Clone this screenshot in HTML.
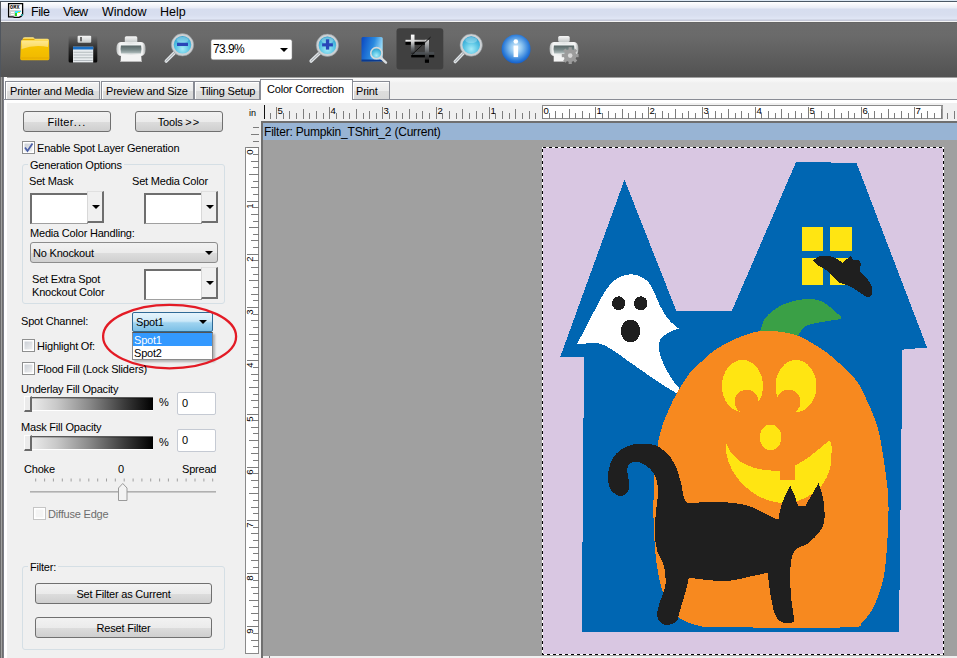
<!DOCTYPE html>
<html><head><meta charset="utf-8">
<style>
*,*:before,*:after{box-sizing:border-box;margin:0;padding:0}
html,body{width:957px;height:658px;overflow:hidden;background:#f0f0f0;font-family:"Liberation Sans",sans-serif;font-size:11px;letter-spacing:-0.2px;color:#000}
.a{position:absolute}
.t{position:absolute;white-space:nowrap;line-height:12px}
#frameL{left:0;top:77px;width:7px;height:581px;background:linear-gradient(90deg,#6a6a6a 0,#6a6a6a 1px,#a0a0a0 1px,#a0a0a0 2px,#6e6e6e 2px,#6e6e6e 3px,#7a7c86 3px,#7a7c86 4px,#fff 4px,#fff 7px)}
#frameT{left:0;top:1px;width:1px;height:76px;background:#50565e}
#menu{left:0;top:0;width:957px;height:22px;background:linear-gradient(180deg,#dae6f2 0,#dae6f2 1px,#4a5866 1px,#4a5866 2px,#fff 2px,#fcfcfe 3px,#e8ecf6 8px,#d6ddef 9px,#d8deef 15px,#e0e6f5 19px,#c4c8d8 20px,#c4c8d8 20.5px,#f4f4f4 21px,#f4f4f4 22px)}
#toolbar{left:1px;top:22px;width:956px;height:55px;background:linear-gradient(180deg,#5e5e5e 0,#6c6c6c 1px,#6a6a6a 25%,#5a5a5a 75%,#525252 100%)}
#below{left:3px;top:77px;width:954px;height:26px;background:linear-gradient(180deg,#a0a0a0 0,#a0a0a0 1px,#fafafa 1px,#f6f6f6 4px,#f0f0f0 6px,#f0f0f0 22px,#fff 22px)}
.tab{position:absolute;top:81px;height:19px;border:1px solid #898c95;border-bottom:none;box-shadow:inset 1px 1px 0 #fff;background:linear-gradient(180deg,#f3f3f3 0,#ebebeb 50%,#dcdcdc 51%,#d8d8d8 100%);white-space:nowrap;line-height:18px}
.btn{position:absolute;border:1px solid #707070;border-radius:3px;background:linear-gradient(180deg,#f2f2f2 0,#ebebeb 50%,#dddddd 51%,#cfcfcf 100%);text-align:center;line-height:20px}
.cb{position:absolute;width:13px;height:13px;border:1px solid #8e8f8f;background:linear-gradient(135deg,#c4c9d0,#f6f6f6);box-shadow:inset 0 0 0 1.5px #fff}
.grp{position:absolute;border:1px solid #d5dfe5;border-radius:3px}
.lbl{position:absolute;background:#f0f0f0;padding:0 2px;white-space:nowrap;line-height:12px}
.cp{width:74px;height:32px}
.cp:before{content:"";position:absolute;left:0;top:2px;width:58px;height:31px;background:#fff;border-top:2px solid #6e6e6e;border-left:2px solid #6e6e6e;border-bottom:1px solid #a0a0a0}
.cp:after{content:"";position:absolute;left:57px;top:0;width:17px;height:32px;border-top:1px solid #e0e0e0;border-left:1px solid #d8d8d8;border-right:2px solid #6e6e6e;border-bottom:2px solid #6e6e6e;background:#f0f0f0}
.arr{position:absolute;width:0;height:0;border-left:4px solid transparent;border-right:4px solid transparent;border-top:4px solid #000}
.grad{width:128px;height:14px;border-bottom:1px solid #fff;box-shadow:inset 0 1px 0 #5a5a5a,inset 0 2px 0 rgba(0,0,0,0.2);background:linear-gradient(90deg,#f4f4f4 0,#c8c8c8 25%,#8a8a8a 50%,#3a3a3a 78%,#000 100%)}
.thumb{width:8px;height:16px;border-top:1px solid #fdfdfd;border-left:1px solid #fdfdfd;border-right:2px solid #6a6a6a;border-bottom:2px solid #6a6a6a;background:#ebebeb}
.tbox{width:39px;height:23px;background:#fff;border:1px solid #c5cad3;border-radius:2px;padding-left:4px;line-height:20px}
</style></head><body>
<div id="menu" class="a"></div>
<svg class="a" style="left:0;top:0" width="30" height="22">
<path d="M8.6 3.6 H22.6 V14.6 L21 16.4 L19 17.4 H14.5 L13 16.8 H8.6 Z" fill="#fff" stroke="#000" stroke-width="1.3"/>
<text x="10" y="9" font-size="5" font-weight="bold" letter-spacing="0.3" font-family="Liberation Mono">OMX</text>
<rect x="10" y="10" width="11" height="1" fill="#cfcfcf"/>
<rect x="10" y="11" width="5" height="5" fill="#d0d0d0"/>
<rect x="11" y="12" width="3" height="1" fill="#fff"/><rect x="11" y="14" width="3" height="1" fill="#fff"/>
<rect x="15" y="11" width="3" height="2" fill="#2ee8f8"/><rect x="18" y="11" width="3" height="1" fill="#2ee8f8"/>
<rect x="15" y="13" width="2" height="3" fill="#22dd22"/><rect x="18" y="12" width="2" height="1" fill="#f0e000"/>
<rect x="21" y="14" width="2" height="2" fill="#2a9a9a"/>
</svg>
<div class="t" style="left:31px;top:6px;font-size:12.5px;letter-spacing:-0.4px">File</div>
<div class="t" style="left:63px;top:6px;font-size:12.5px;letter-spacing:-0.6px">View</div>
<div class="t" style="left:102px;top:6px;font-size:12.5px;letter-spacing:0">Window</div>
<div class="t" style="left:160px;top:6px;font-size:12.5px;letter-spacing:0">Help</div>
<div id="toolbar" class="a"></div>
<div id="below" class="a"></div>
<div id="frameL" class="a"></div><div id="frameT" class="a"></div>
<svg class="a" style="left:0;top:0" width="600" height="76">
<defs>
<radialGradient id="lensg" cx="50%" cy="70%" r="65%"><stop offset="0" stop-color="#a8ecf8"/><stop offset="0.55" stop-color="#58c4e4"/><stop offset="1" stop-color="#2a9ccc"/></radialGradient>
<linearGradient id="fold" x1="0" y1="0" x2="0" y2="1"><stop offset="0" stop-color="#ffe98a"/><stop offset="0.4" stop-color="#f7c400"/><stop offset="1" stop-color="#f0b800"/></linearGradient>
<linearGradient id="flop" x1="0" y1="0" x2="0" y2="1"><stop offset="0" stop-color="#6a6a6a"/><stop offset="0.5" stop-color="#2a2a2a"/><stop offset="1" stop-color="#050505"/></linearGradient>
<linearGradient id="silv" x1="0" y1="0" x2="0" y2="1"><stop offset="0" stop-color="#f6f6f6"/><stop offset="1" stop-color="#c4c8c8"/></linearGradient>
<linearGradient id="pdark" x1="0" y1="0" x2="0" y2="1"><stop offset="0" stop-color="#f4f8f8"/><stop offset="0.2" stop-color="#5e6c6c"/><stop offset="0.6" stop-color="#7a8a8a"/><stop offset="1" stop-color="#b4c0c0"/></linearGradient>
<linearGradient id="pbody" x1="0" y1="0" x2="1" y2="0"><stop offset="0" stop-color="#b8bcbc"/><stop offset="0.12" stop-color="#f6f6f6"/><stop offset="0.5" stop-color="#e4e6e6"/><stop offset="0.88" stop-color="#f6f6f6"/><stop offset="1" stop-color="#a8acac"/></linearGradient>
<linearGradient id="bdoc" x1="0" y1="0" x2="1" y2="0.3"><stop offset="0" stop-color="#0a46c0"/><stop offset="0.6" stop-color="#2a8ae0"/><stop offset="1" stop-color="#9adcf8"/></linearGradient>
<radialGradient id="infog" cx="50%" cy="45%" r="60%"><stop offset="0" stop-color="#e0f0fc"/><stop offset="0.35" stop-color="#8cc4f0"/><stop offset="0.75" stop-color="#2a7ad8"/><stop offset="1" stop-color="#0a4fc0"/></radialGradient>
<linearGradient id="cropg" x1="0" y1="0" x2="0" y2="1"><stop offset="0" stop-color="#ffffff"/><stop offset="0.5" stop-color="#9a9a9a"/><stop offset="1" stop-color="#202020"/></linearGradient>
</defs>
<!-- folder -->
<path d="M22.5 40 L23 38 Q23.5 37.3 25 37.3 L33 37.3 Q34.3 37.3 34.6 38.8 L47.5 38.8 Q49 39 49 40.5 L49.4 58.5 Q49.4 60.2 47.8 60.2 L21.7 60.2 Q20.2 60.2 20.2 58.5 L21 40.5 Z" fill="url(#fold)"/>
<path d="M23 38.8 L34.6 38.8 L34.3 40 L22.7 40 Z" fill="#e0a800"/>
<path d="M21.8 41 L48 41 L48 47 Q35 44 21.5 49 Z" fill="#fff3c0" opacity="0.55"/>
<rect x="20.5" y="57.5" width="28.6" height="1" fill="#e0a000" opacity="0.6"/>
<!-- floppy -->
<rect x="68.6" y="35.6" width="28.7" height="27" rx="1.5" fill="url(#flop)"/>
<rect x="77.6" y="35.8" width="13.6" height="7" rx="1" fill="url(#silv)"/>
<rect x="80" y="37" width="2" height="4.3" fill="#6a6a6a"/>
<rect x="73" y="46.7" width="20.2" height="15.8" fill="#e8ecee"/>
<rect x="73" y="46.7" width="20.2" height="2.8" fill="#1a6fc4"/>
<rect x="73.5" y="51.8" width="19.2" height="0.8" fill="#a8b0b4"/>
<rect x="73.5" y="54.6" width="19.2" height="0.8" fill="#a8b0b4"/>
<rect x="73.5" y="57.4" width="19.2" height="0.8" fill="#a8b0b4"/>
<rect x="73.5" y="60.2" width="19.2" height="0.8" fill="#a8b0b4"/>
<!-- printer -->
<rect x="124.8" y="36.2" width="12.5" height="6.5" rx="1.5" fill="url(#silv)"/>
<path d="M121 42 H141 Q145.6 42 145.6 49 Q145.6 56 141 56 H121 Q116.4 56 116.4 49 Q116.4 42 121 42 Z" fill="url(#pbody)"/>
<path d="M121 44.5 H141 Q142 49 141 53.5 H121 Q120 49 121 44.5 Z" fill="url(#pdark)"/>
<path d="M121 55 L141.2 55 L141.6 62 L120.6 62 Z" fill="#f4f4f4"/>
<rect x="120.6" y="61" width="21" height="1" fill="#b8b8b8"/>
<line x1="176.0" y1="51.3" x2="166.2" y2="61.1" stroke="#dfe3e6" stroke-width="3.4" stroke-linecap="round"/>
<line x1="176.0" y1="51.3" x2="166.2" y2="61.1" stroke="#9aa0a4" stroke-width="1" stroke-linecap="round"/>
<circle cx="182.5" cy="44.8" r="10" fill="url(#lensg)" stroke="#cdd1d4" stroke-width="2.4"/>
<circle cx="182.5" cy="44.8" r="11.2" fill="none" stroke="#8f9699" stroke-width="0.6"/>
<ellipse cx="182.5" cy="39.8" rx="6" ry="3" fill="#e6f8fd" opacity="0.3"/><rect x="177.0" y="42.8" width="11" height="3.2" fill="#2a46b8"/>
<!-- combo -->
<rect x="211" y="39.4" width="81" height="20.3" rx="2" fill="#fff" stroke="#8a8a8a" stroke-width="0.5"/>
<line x1="320.9" y1="51.8" x2="311.1" y2="61.1" stroke="#dfe3e6" stroke-width="3.4" stroke-linecap="round"/>
<line x1="320.9" y1="51.8" x2="311.1" y2="61.1" stroke="#9aa0a4" stroke-width="1" stroke-linecap="round"/>
<circle cx="327.4" cy="45.3" r="10" fill="url(#lensg)" stroke="#cdd1d4" stroke-width="2.4"/>
<circle cx="327.4" cy="45.3" r="11.2" fill="none" stroke="#8f9699" stroke-width="0.6"/>
<ellipse cx="327.4" cy="40.3" rx="6" ry="3" fill="#e6f8fd" opacity="0.3"/><rect x="322.09999999999997" y="43.3" width="10.8" height="3.1" fill="#2a46b8"/><rect x="325.9" y="39.3" width="3.3" height="10.3" fill="#2a46b8"/>
<!-- blue doc -->
<rect x="361.5" y="37.1" width="21.2" height="24.1" rx="1.5" fill="url(#bdoc)"/>
<rect x="361.5" y="59.5" width="21.2" height="2" fill="#0a3a90"/>
<line x1="379.5" y1="56.5" x2="386" y2="62.6" stroke="#d9dde0" stroke-width="2.4" stroke-linecap="round"/>
<circle cx="376.4" cy="53.2" r="5.6" fill="url(#lensg)" stroke="#d6d9db" stroke-width="1.6"/>
<!-- crop highlight -->
<rect x="396.5" y="28.2" width="46.8" height="41.4" rx="3" fill="#404040"/>
<g>
<defs><linearGradient id="vbar" x1="0" y1="0" x2="0" y2="1"><stop offset="0" stop-color="#ffffff"/><stop offset="0.35" stop-color="#d8d8d8"/><stop offset="0.7" stop-color="#6a6e72"/><stop offset="1" stop-color="#2a2c2e"/></linearGradient>
<linearGradient id="vbar2" x1="0" y1="0" x2="0" y2="1"><stop offset="0" stop-color="#d0d0d0"/><stop offset="0.45" stop-color="#7a7e82"/><stop offset="0.8" stop-color="#3a3c3e"/><stop offset="1" stop-color="#2a2a2a"/></linearGradient>
<linearGradient id="hbarT" x1="0" y1="0" x2="1" y2="0"><stop offset="0" stop-color="#f0f0f0"/><stop offset="1" stop-color="#a8a8a8"/></linearGradient></defs>
<rect x="405.5" y="39.8" width="22.4" height="2" fill="url(#hbarT)"/>
<rect x="405.5" y="41.8" width="22" height="3" fill="#000"/>
<rect x="411.2" y="51.9" width="23" height="3" fill="#4a4e52"/>
<rect x="411.2" y="54.9" width="23" height="2.5" fill="#000"/>
<rect x="410.9" y="34.6" width="3.6" height="19.4" fill="url(#vbar)"/>
<rect x="424.9" y="39.8" width="4.1" height="19.7" fill="url(#vbar2)"/>
<rect x="424.9" y="59.5" width="4.1" height="3.3" fill="#000"/>
<line x1="412" y1="54.6" x2="430.6" y2="37.1" stroke="#111" stroke-width="1"/>
</g>
<line x1="464.7" y1="51.6" x2="455.2" y2="61.6" stroke="#dfe3e6" stroke-width="3.4" stroke-linecap="round"/>
<line x1="464.7" y1="51.6" x2="455.2" y2="61.6" stroke="#9aa0a4" stroke-width="1" stroke-linecap="round"/>
<circle cx="471.2" cy="45.1" r="10" fill="url(#lensg)" stroke="#cdd1d4" stroke-width="2.4"/>
<circle cx="471.2" cy="45.1" r="11.2" fill="none" stroke="#8f9699" stroke-width="0.6"/>
<ellipse cx="471.2" cy="40.1" rx="6" ry="3" fill="#e6f8fd" opacity="0.3"/>
<!-- info -->
<circle cx="516.1" cy="49.1" r="14.5" fill="url(#infog)"/>
<circle cx="515.8" cy="41.5" r="2.3" fill="#fff"/>
<rect x="513.6" y="45.6" width="4.5" height="11.5" fill="#fff"/>
<!-- printer gear -->
<rect x="558.2" y="36" width="11.5" height="6" rx="1.5" fill="url(#silv)"/>
<path d="M554 42 H574 Q578.4 42 578.4 49 Q578.4 56 574 56 H554 Q549.6 56 549.6 49 Q549.6 42 554 42 Z" fill="url(#pbody)"/>
<path d="M554 44.5 H574 Q575 49 574 53.5 H554 Q553 49 554 44.5 Z" fill="url(#pdark)"/>
<path d="M553.7 55.6 L564.7 55.6 L564.7 61.6 L553.7 61.6 Z" fill="#f4f4f4"/>
<g transform="translate(570.2,55.6)">
<circle r="6.3" fill="#9c9c9c"/>
<g fill="#9c9c9c"><rect x="-1.6" y="-8.4" width="3.2" height="3" transform="rotate(0)"/><rect x="-1.6" y="-8.4" width="3.2" height="3" transform="rotate(45)"/><rect x="-1.6" y="-8.4" width="3.2" height="3" transform="rotate(90)"/><rect x="-1.6" y="-8.4" width="3.2" height="3" transform="rotate(135)"/><rect x="-1.6" y="-8.4" width="3.2" height="3" transform="rotate(180)"/><rect x="-1.6" y="-8.4" width="3.2" height="3" transform="rotate(225)"/><rect x="-1.6" y="-8.4" width="3.2" height="3" transform="rotate(270)"/><rect x="-1.6" y="-8.4" width="3.2" height="3" transform="rotate(315)"/></g>
<circle r="2.3" fill="#d8d8d8"/>
</g>
</svg>
<div class="t" style="left:213px;top:43px;font-size:12px;letter-spacing:-0.6px">73.9%</div>
<i class="arr" style="left:279.5px;top:47.5px;border-width:4.5px 4px 0 4px"></i>


<!-- tabs -->
<div class="tab" style="left:5px;width:95px;padding-left:4px">Printer and Media</div>
<div class="tab" style="left:101px;width:93px;padding-left:4px">Preview and Size</div>
<div class="tab" style="left:194px;width:66px;padding-left:5px">Tiling Setup</div>
<div class="tab" style="left:352px;width:38px;padding-left:3px">Print</div>
<div class="a" style="left:3px;top:99px;width:954px;height:1px;background:#898c95"></div>
<div class="tab" style="left:260px;top:79px;width:93px;height:21px;background:#fff;padding-left:6px;line-height:18px">Color Correction</div>

<!-- panel -->
<div class="a" style="left:7px;top:103px;width:950px;height:555px;background:#f0f0f0"></div>
<div class="btn" style="left:23px;top:111px;width:88px;height:21px"><span style="letter-spacing:0.3px">Filter</span><span style="letter-spacing:1.2px">...</span></div>
<div class="btn" style="left:135px;top:111px;width:88px;height:21px">Tools <span style="letter-spacing:1px">&gt;&gt;</span></div>
<div class="cb" style="left:22px;top:141px"><svg width="11" height="11" style="position:absolute;left:0;top:0"><path d="M2 5.5 L4.5 9 L9.5 1.5" stroke="#4a5fa8" stroke-width="1.8" fill="none"/></svg></div>
<div class="t" style="left:37px;top:142px">Enable Spot Layer Generation</div>

<div class="grp" style="left:22px;top:164px;width:203px;height:140px"></div>
<div class="lbl" style="left:28px;top:159px">Generation Options</div>
<div class="t" style="left:29px;top:175px">Set Mask</div>
<div class="t" style="left:132px;top:175px">Set Media Color</div>

<div class="a cp" style="left:30px;top:191px"><i class="arr" style="left:62px;top:14px;z-index:2"></i></div>
<div class="a cp" style="left:144px;top:191px"><i class="arr" style="left:62px;top:14px;z-index:2"></i></div>
<div class="t" style="left:30px;top:227px">Media Color Handling:</div>
<div class="btn combo" style="left:30px;top:242px;width:188px;height:21px;text-align:left;padding-left:2px;border-color:#8c8c8c">No Knockout<i class="arr" style="left:174px;top:8px"></i></div>
<div class="t" style="left:32px;top:273px">Set Extra Spot</div>
<div class="t" style="left:32px;top:286px">Knockout Color</div>
<div class="a cp" style="left:144px;top:267px"><i class="arr" style="left:62px;top:14px;z-index:2"></i></div>

<div class="t" style="left:21px;top:315px">Spot Channel:</div>
<div class="a" style="left:132px;top:312px;width:81px;height:20px;border:1px solid #2f6a96;border-radius:2px;background:linear-gradient(180deg,#e6f4fc 0,#cde9f8 45%,#9fd3f0 55%,#7cc0e6 100%)"><span class="t" style="left:3px;top:3px">Spot1</span><i class="arr" style="left:66px;top:7px"></i></div>
<div class="a" style="left:132px;top:332px;width:81px;height:28px;background:#fff;border:1px solid #8a8a8a;border-top-color:#555;box-shadow:2px 2px 2px rgba(0,0,0,0.25)"><div class="a" style="left:0;top:0;width:79px;height:13px;background:#3399ff"></div><span class="t" style="left:1px;top:1px;color:#fff">Spot1</span><span class="t" style="left:1px;top:14px">Spot2</span></div>
<svg class="a" style="left:100px;top:302px" width="140" height="70"><ellipse cx="69.6" cy="34.6" rx="66.5" ry="31.8" fill="none" stroke="#e31b25" stroke-width="2.3"/></svg>
<div class="cb" style="left:22px;top:339px"></div>
<div class="t" style="left:37px;top:340px">Highlight Of:</div>
<div class="cb" style="left:22px;top:362px"></div>
<div class="t" style="left:37px;top:363px">Flood Fill (Lock Sliders)</div>

<div class="t" style="left:21px;top:383px">Underlay Fill Opacity</div>
<div class="a grad" style="left:25px;top:397px"></div>
<div class="a thumb" style="left:24px;top:396px"></div>
<div class="t" style="left:159px;top:396px">%</div>
<div class="a tbox" style="left:177px;top:392px">0</div>

<div class="t" style="left:21px;top:421px">Mask Fill Opacity</div>
<div class="a grad" style="left:25px;top:436px"></div>
<div class="a thumb" style="left:24px;top:435px"></div>
<div class="t" style="left:159px;top:436px">%</div>
<div class="a tbox" style="left:177px;top:429px">0</div>

<div class="t" style="left:24px;top:463px">Choke</div>
<div class="t" style="left:118px;top:463px">0</div>
<div class="t" style="left:182px;top:463px">Spread</div>
<svg class="a" style="left:0;top:470px" width="240" height="40" id="chokesl"><rect x="35.2" y="8.5" width="1" height="3" fill="#a0a0a0"/><rect x="44.1" y="8.5" width="1" height="3" fill="#a0a0a0"/><rect x="52.9" y="8.5" width="1" height="3" fill="#a0a0a0"/><rect x="61.8" y="8.5" width="1" height="3" fill="#a0a0a0"/><rect x="70.6" y="8.5" width="1" height="3" fill="#a0a0a0"/><rect x="79.5" y="8.5" width="1" height="3" fill="#a0a0a0"/><rect x="88.3" y="8.5" width="1" height="3" fill="#a0a0a0"/><rect x="97.2" y="8.5" width="1" height="3" fill="#a0a0a0"/><rect x="106.0" y="8.5" width="1" height="3" fill="#a0a0a0"/><rect x="114.8" y="8.5" width="1" height="3" fill="#a0a0a0"/><rect x="123.7" y="8.5" width="1" height="3" fill="#a0a0a0"/><rect x="132.6" y="8.5" width="1" height="3" fill="#a0a0a0"/><rect x="141.4" y="8.5" width="1" height="3" fill="#a0a0a0"/><rect x="150.2" y="8.5" width="1" height="3" fill="#a0a0a0"/><rect x="159.1" y="8.5" width="1" height="3" fill="#a0a0a0"/><rect x="167.9" y="8.5" width="1" height="3" fill="#a0a0a0"/><rect x="176.8" y="8.5" width="1" height="3" fill="#a0a0a0"/><rect x="185.6" y="8.5" width="1" height="3" fill="#a0a0a0"/><rect x="194.5" y="8.5" width="1" height="3" fill="#a0a0a0"/><rect x="203.4" y="8.5" width="1" height="3" fill="#a0a0a0"/><rect x="212.2" y="8.5" width="1" height="3" fill="#a0a0a0"/><rect x="30" y="21" width="186" height="2" fill="#c9c9c9"/><rect x="30" y="21" width="186" height="1" fill="#b0b0b0"/><path d="M118.5 30.5 V18 L122.75 13.5 L127 18 V30.5 Z" fill="#f3f3f3" stroke="#9a9a9a"/></svg>
<div class="cb" style="left:33px;top:507px;border-color:#c5c5c5;background:#f4f4f4"></div>
<div class="t" style="left:48px;top:508px;color:#6d6d6d">Diffuse Edge</div>

<div class="grp" style="left:22px;top:566px;width:203px;height:84px"></div>
<div class="lbl" style="left:28px;top:561px">Filter:</div>
<div class="btn" style="left:35px;top:583px;width:177px;height:21px">Set Filter as Current</div>
<div class="btn" style="left:35px;top:617px;width:177px;height:21px">Reset Filter</div>

<svg class="a" id="ruler" style="left:0;top:0;letter-spacing:0" width="957" height="658"><rect x="264" y="105" width="1" height="14" fill="#111"/><rect x="542.5" y="105.5" width="400" height="13" fill="#fff" stroke="#8a8a8a" stroke-width="1"/><rect x="941" y="106" width="2" height="13" fill="#9a9a9a"/><rect x="270" y="113" width="1" height="6" fill="#7c7c7c"/><rect x="276" y="107" width="1" height="12" fill="#7c7c7c"/><text x="277.6" y="114.3" font-size="9.6">5</text><rect x="283" y="113" width="1" height="6" fill="#7c7c7c"/><rect x="289" y="111" width="1" height="8" fill="#7c7c7c"/><rect x="296" y="113" width="1" height="6" fill="#7c7c7c"/><rect x="303" y="109" width="1" height="10" fill="#7c7c7c"/><rect x="309" y="113" width="1" height="6" fill="#7c7c7c"/><rect x="316" y="111" width="1" height="8" fill="#7c7c7c"/><rect x="323" y="113" width="1" height="6" fill="#7c7c7c"/><rect x="329" y="107" width="1" height="12" fill="#7c7c7c"/><text x="330.6" y="114.3" font-size="9.6">4</text><rect x="336" y="113" width="1" height="6" fill="#7c7c7c"/><rect x="343" y="111" width="1" height="8" fill="#7c7c7c"/><rect x="349" y="113" width="1" height="6" fill="#7c7c7c"/><rect x="356" y="109" width="1" height="10" fill="#7c7c7c"/><rect x="363" y="113" width="1" height="6" fill="#7c7c7c"/><rect x="369" y="111" width="1" height="8" fill="#7c7c7c"/><rect x="376" y="113" width="1" height="6" fill="#7c7c7c"/><rect x="382" y="107" width="1" height="12" fill="#7c7c7c"/><text x="383.6" y="114.3" font-size="9.6">3</text><rect x="389" y="113" width="1" height="6" fill="#7c7c7c"/><rect x="396" y="111" width="1" height="8" fill="#7c7c7c"/><rect x="402" y="113" width="1" height="6" fill="#7c7c7c"/><rect x="409" y="109" width="1" height="10" fill="#7c7c7c"/><rect x="416" y="113" width="1" height="6" fill="#7c7c7c"/><rect x="422" y="111" width="1" height="8" fill="#7c7c7c"/><rect x="429" y="113" width="1" height="6" fill="#7c7c7c"/><rect x="436" y="107" width="1" height="12" fill="#7c7c7c"/><text x="437.6" y="114.3" font-size="9.6">2</text><rect x="442" y="113" width="1" height="6" fill="#7c7c7c"/><rect x="449" y="111" width="1" height="8" fill="#7c7c7c"/><rect x="456" y="113" width="1" height="6" fill="#7c7c7c"/><rect x="462" y="109" width="1" height="10" fill="#7c7c7c"/><rect x="469" y="113" width="1" height="6" fill="#7c7c7c"/><rect x="476" y="111" width="1" height="8" fill="#7c7c7c"/><rect x="482" y="113" width="1" height="6" fill="#7c7c7c"/><rect x="489" y="107" width="1" height="12" fill="#7c7c7c"/><text x="490.6" y="114.3" font-size="9.6">1</text><rect x="495" y="113" width="1" height="6" fill="#7c7c7c"/><rect x="502" y="111" width="1" height="8" fill="#7c7c7c"/><rect x="509" y="113" width="1" height="6" fill="#7c7c7c"/><rect x="515" y="109" width="1" height="10" fill="#7c7c7c"/><rect x="522" y="113" width="1" height="6" fill="#7c7c7c"/><rect x="529" y="111" width="1" height="8" fill="#7c7c7c"/><rect x="535" y="113" width="1" height="6" fill="#7c7c7c"/><rect x="542" y="107" width="1" height="12" fill="#7c7c7c"/><text x="543.6" y="114.3" font-size="9.6">0</text><rect x="549" y="113" width="1" height="6" fill="#7c7c7c"/><rect x="555" y="111" width="1" height="8" fill="#7c7c7c"/><rect x="562" y="113" width="1" height="6" fill="#7c7c7c"/><rect x="569" y="109" width="1" height="10" fill="#7c7c7c"/><rect x="575" y="113" width="1" height="6" fill="#7c7c7c"/><rect x="582" y="111" width="1" height="8" fill="#7c7c7c"/><rect x="589" y="113" width="1" height="6" fill="#7c7c7c"/><rect x="595" y="107" width="1" height="12" fill="#7c7c7c"/><text x="596.6" y="114.3" font-size="9.6">1</text><rect x="602" y="113" width="1" height="6" fill="#7c7c7c"/><rect x="608" y="111" width="1" height="8" fill="#7c7c7c"/><rect x="615" y="113" width="1" height="6" fill="#7c7c7c"/><rect x="622" y="109" width="1" height="10" fill="#7c7c7c"/><rect x="628" y="113" width="1" height="6" fill="#7c7c7c"/><rect x="635" y="111" width="1" height="8" fill="#7c7c7c"/><rect x="642" y="113" width="1" height="6" fill="#7c7c7c"/><rect x="648" y="107" width="1" height="12" fill="#7c7c7c"/><text x="649.6" y="114.3" font-size="9.6">2</text><rect x="655" y="113" width="1" height="6" fill="#7c7c7c"/><rect x="662" y="111" width="1" height="8" fill="#7c7c7c"/><rect x="668" y="113" width="1" height="6" fill="#7c7c7c"/><rect x="675" y="109" width="1" height="10" fill="#7c7c7c"/><rect x="682" y="113" width="1" height="6" fill="#7c7c7c"/><rect x="688" y="111" width="1" height="8" fill="#7c7c7c"/><rect x="695" y="113" width="1" height="6" fill="#7c7c7c"/><rect x="702" y="107" width="1" height="12" fill="#7c7c7c"/><text x="703.6" y="114.3" font-size="9.6">3</text><rect x="708" y="113" width="1" height="6" fill="#7c7c7c"/><rect x="715" y="111" width="1" height="8" fill="#7c7c7c"/><rect x="721" y="113" width="1" height="6" fill="#7c7c7c"/><rect x="728" y="109" width="1" height="10" fill="#7c7c7c"/><rect x="735" y="113" width="1" height="6" fill="#7c7c7c"/><rect x="741" y="111" width="1" height="8" fill="#7c7c7c"/><rect x="748" y="113" width="1" height="6" fill="#7c7c7c"/><rect x="755" y="107" width="1" height="12" fill="#7c7c7c"/><text x="756.6" y="114.3" font-size="9.6">4</text><rect x="761" y="113" width="1" height="6" fill="#7c7c7c"/><rect x="768" y="111" width="1" height="8" fill="#7c7c7c"/><rect x="775" y="113" width="1" height="6" fill="#7c7c7c"/><rect x="781" y="109" width="1" height="10" fill="#7c7c7c"/><rect x="788" y="113" width="1" height="6" fill="#7c7c7c"/><rect x="795" y="111" width="1" height="8" fill="#7c7c7c"/><rect x="801" y="113" width="1" height="6" fill="#7c7c7c"/><rect x="808" y="107" width="1" height="12" fill="#7c7c7c"/><text x="809.6" y="114.3" font-size="9.6">5</text><rect x="814" y="113" width="1" height="6" fill="#7c7c7c"/><rect x="821" y="111" width="1" height="8" fill="#7c7c7c"/><rect x="828" y="113" width="1" height="6" fill="#7c7c7c"/><rect x="834" y="109" width="1" height="10" fill="#7c7c7c"/><rect x="841" y="113" width="1" height="6" fill="#7c7c7c"/><rect x="848" y="111" width="1" height="8" fill="#7c7c7c"/><rect x="854" y="113" width="1" height="6" fill="#7c7c7c"/><rect x="861" y="107" width="1" height="12" fill="#7c7c7c"/><text x="862.6" y="114.3" font-size="9.6">6</text><rect x="868" y="113" width="1" height="6" fill="#7c7c7c"/><rect x="874" y="111" width="1" height="8" fill="#7c7c7c"/><rect x="881" y="113" width="1" height="6" fill="#7c7c7c"/><rect x="888" y="109" width="1" height="10" fill="#7c7c7c"/><rect x="894" y="113" width="1" height="6" fill="#7c7c7c"/><rect x="901" y="111" width="1" height="8" fill="#7c7c7c"/><rect x="908" y="113" width="1" height="6" fill="#7c7c7c"/><rect x="914" y="107" width="1" height="12" fill="#7c7c7c"/><text x="915.6" y="114.3" font-size="9.6">7</text><rect x="921" y="113" width="1" height="6" fill="#7c7c7c"/><rect x="927" y="111" width="1" height="8" fill="#7c7c7c"/><rect x="934" y="113" width="1" height="6" fill="#7c7c7c"/><rect x="941" y="109" width="1" height="10" fill="#7c7c7c"/><rect x="947" y="113" width="1" height="6" fill="#7c7c7c"/><rect x="954" y="111" width="1" height="8" fill="#7c7c7c"/><rect x="245.5" y="147.5" width="13" height="506" fill="#fff" stroke="#8a8a8a"/><rect x="253" y="127" width="6" height="1" fill="#7c7c7c"/><rect x="251" y="134" width="8" height="1" fill="#7c7c7c"/><rect x="253" y="141" width="6" height="1" fill="#7c7c7c"/><rect x="247" y="147" width="12" height="1" fill="#7c7c7c"/><text transform="translate(253.3,149.5) rotate(-90)" font-size="9.6" text-anchor="end">0</text><rect x="253" y="154" width="6" height="1" fill="#7c7c7c"/><rect x="251" y="161" width="8" height="1" fill="#7c7c7c"/><rect x="253" y="167" width="6" height="1" fill="#7c7c7c"/><rect x="249" y="174" width="10" height="1" fill="#7c7c7c"/><rect x="253" y="181" width="6" height="1" fill="#7c7c7c"/><rect x="251" y="187" width="8" height="1" fill="#7c7c7c"/><rect x="253" y="194" width="6" height="1" fill="#7c7c7c"/><rect x="247" y="201" width="12" height="1" fill="#7c7c7c"/><text transform="translate(253.3,203.5) rotate(-90)" font-size="9.6" text-anchor="end">1</text><rect x="253" y="207" width="6" height="1" fill="#7c7c7c"/><rect x="251" y="214" width="8" height="1" fill="#7c7c7c"/><rect x="253" y="221" width="6" height="1" fill="#7c7c7c"/><rect x="249" y="227" width="10" height="1" fill="#7c7c7c"/><rect x="253" y="234" width="6" height="1" fill="#7c7c7c"/><rect x="251" y="240" width="8" height="1" fill="#7c7c7c"/><rect x="253" y="247" width="6" height="1" fill="#7c7c7c"/><rect x="247" y="254" width="12" height="1" fill="#7c7c7c"/><text transform="translate(253.3,256.5) rotate(-90)" font-size="9.6" text-anchor="end">2</text><rect x="253" y="260" width="6" height="1" fill="#7c7c7c"/><rect x="251" y="267" width="8" height="1" fill="#7c7c7c"/><rect x="253" y="274" width="6" height="1" fill="#7c7c7c"/><rect x="249" y="280" width="10" height="1" fill="#7c7c7c"/><rect x="253" y="287" width="6" height="1" fill="#7c7c7c"/><rect x="251" y="294" width="8" height="1" fill="#7c7c7c"/><rect x="253" y="300" width="6" height="1" fill="#7c7c7c"/><rect x="247" y="307" width="12" height="1" fill="#7c7c7c"/><text transform="translate(253.3,309.5) rotate(-90)" font-size="9.6" text-anchor="end">3</text><rect x="253" y="314" width="6" height="1" fill="#7c7c7c"/><rect x="251" y="320" width="8" height="1" fill="#7c7c7c"/><rect x="253" y="327" width="6" height="1" fill="#7c7c7c"/><rect x="249" y="334" width="10" height="1" fill="#7c7c7c"/><rect x="253" y="340" width="6" height="1" fill="#7c7c7c"/><rect x="251" y="347" width="8" height="1" fill="#7c7c7c"/><rect x="253" y="354" width="6" height="1" fill="#7c7c7c"/><rect x="247" y="360" width="12" height="1" fill="#7c7c7c"/><text transform="translate(253.3,362.5) rotate(-90)" font-size="9.6" text-anchor="end">4</text><rect x="253" y="367" width="6" height="1" fill="#7c7c7c"/><rect x="251" y="374" width="8" height="1" fill="#7c7c7c"/><rect x="253" y="380" width="6" height="1" fill="#7c7c7c"/><rect x="249" y="387" width="10" height="1" fill="#7c7c7c"/><rect x="253" y="394" width="6" height="1" fill="#7c7c7c"/><rect x="251" y="400" width="8" height="1" fill="#7c7c7c"/><rect x="253" y="407" width="6" height="1" fill="#7c7c7c"/><rect x="247" y="414" width="12" height="1" fill="#7c7c7c"/><text transform="translate(253.3,416.5) rotate(-90)" font-size="9.6" text-anchor="end">5</text><rect x="253" y="420" width="6" height="1" fill="#7c7c7c"/><rect x="251" y="427" width="8" height="1" fill="#7c7c7c"/><rect x="253" y="433" width="6" height="1" fill="#7c7c7c"/><rect x="249" y="440" width="10" height="1" fill="#7c7c7c"/><rect x="253" y="447" width="6" height="1" fill="#7c7c7c"/><rect x="251" y="453" width="8" height="1" fill="#7c7c7c"/><rect x="253" y="460" width="6" height="1" fill="#7c7c7c"/><rect x="247" y="467" width="12" height="1" fill="#7c7c7c"/><text transform="translate(253.3,469.5) rotate(-90)" font-size="9.6" text-anchor="end">6</text><rect x="253" y="473" width="6" height="1" fill="#7c7c7c"/><rect x="251" y="480" width="8" height="1" fill="#7c7c7c"/><rect x="253" y="487" width="6" height="1" fill="#7c7c7c"/><rect x="249" y="493" width="10" height="1" fill="#7c7c7c"/><rect x="253" y="500" width="6" height="1" fill="#7c7c7c"/><rect x="251" y="507" width="8" height="1" fill="#7c7c7c"/><rect x="253" y="513" width="6" height="1" fill="#7c7c7c"/><rect x="247" y="520" width="12" height="1" fill="#7c7c7c"/><text transform="translate(253.3,522.5) rotate(-90)" font-size="9.6" text-anchor="end">7</text><rect x="253" y="527" width="6" height="1" fill="#7c7c7c"/><rect x="251" y="533" width="8" height="1" fill="#7c7c7c"/><rect x="253" y="540" width="6" height="1" fill="#7c7c7c"/><rect x="249" y="547" width="10" height="1" fill="#7c7c7c"/><rect x="253" y="553" width="6" height="1" fill="#7c7c7c"/><rect x="251" y="560" width="8" height="1" fill="#7c7c7c"/><rect x="253" y="567" width="6" height="1" fill="#7c7c7c"/><rect x="247" y="573" width="12" height="1" fill="#7c7c7c"/><text transform="translate(253.3,575.5) rotate(-90)" font-size="9.6" text-anchor="end">8</text><rect x="253" y="580" width="6" height="1" fill="#7c7c7c"/><rect x="251" y="587" width="8" height="1" fill="#7c7c7c"/><rect x="253" y="593" width="6" height="1" fill="#7c7c7c"/><rect x="249" y="600" width="10" height="1" fill="#7c7c7c"/><rect x="253" y="606" width="6" height="1" fill="#7c7c7c"/><rect x="251" y="613" width="8" height="1" fill="#7c7c7c"/><rect x="253" y="620" width="6" height="1" fill="#7c7c7c"/><rect x="247" y="626" width="12" height="1" fill="#7c7c7c"/><text transform="translate(253.3,628.5) rotate(-90)" font-size="9.6" text-anchor="end">9</text><rect x="253" y="633" width="6" height="1" fill="#7c7c7c"/><rect x="251" y="640" width="8" height="1" fill="#7c7c7c"/><rect x="253" y="646" width="6" height="1" fill="#7c7c7c"/><text x="249" y="116" font-size="9">in</text></svg>
<div class="a" style="left:261px;top:121px;width:696px;height:537px;background:#6f6f6f"></div>
<div class="a" style="left:263px;top:123px;width:694px;height:17px;background:#98b4d4"></div>
<div class="t" style="left:264px;top:126px;font-size:12px;letter-spacing:-0.2px">Filter: Pumpkin_TShirt_2 (Current)</div>
<div class="a" style="left:263px;top:140px;width:694px;height:518px;background:#a0a0a0"></div>
<div class="a" style="left:263px;top:656px;width:694px;height:2px;background:#f0f0f0"></div><div class="a" style="left:269px;top:656px;width:1px;height:2px;background:#7c7c7c"></div>
<svg class="a" style="left:0;top:0" width="957" height="658" shape-rendering="crispEdges">
<rect x="542" y="147" width="402" height="508" fill="#d9c7e2"/>
<rect x="542.5" y="147.5" width="401" height="507" fill="none" stroke="#fff" stroke-width="1"/>
<rect x="542.5" y="147.5" width="401" height="507" fill="none" stroke="#000" stroke-width="1" stroke-dasharray="3 3"/>
</svg>
<svg class="a" style="left:0;top:0" width="957" height="658" shape-rendering="crispEdges">
<!-- house -->
<path fill="#0066b2" d="M624.5 179.7 L676.2 310.5 L732 310.5 L796 162.1 L820 162.1 L856.7 163.4 L927 347.5 L902.5 349.6 L899 631.5 L581.8 631.5 L584 357 L560.2 357 Z"/>
<!-- windows -->
<g fill="#ffe512">
<rect x="802" y="227" width="21" height="24"/>
<rect x="830" y="227" width="22" height="24"/>
<rect x="802" y="258" width="21" height="27"/>
<rect x="830" y="258" width="22" height="27"/>
</g>
<!-- bat -->
<path fill="#1f1f1f" d="M813.2 260.7 C813.2 260.7 816.2 257.2 819.3 256.5 C822.3 255.8 827.6 255.5 831.5 256.5 C835.4 257.5 842.4 262.6 842.4 262.6 C842.4 262.6 851.0 255.9 851.0 255.9 C851.0 255.9 853.4 260.1 853.4 260.1 C853.4 260.1 858.2 260.1 858.2 260.1 C858.2 260.1 860.5 262.0 860.7 263.8 C860.9 265.6 859.4 271.0 859.4 271.0 C859.4 271.0 864.7 275.9 866.7 278.4 C868.7 280.8 870.7 283.1 871.6 285.7 C872.5 288.3 872.8 292.3 872.2 294.2 C871.6 296.1 869.9 297.4 868.0 297.2 C866.1 297.0 860.7 293.0 860.7 293.0 C860.7 293.0 852.0 287.3 848.5 285.7 C845.0 284.1 840.0 283.2 840.0 283.2 C840.0 283.2 830.3 273.5 830.3 273.5 C830.3 273.5 826.2 269.9 824.2 268.6 C822.2 267.3 819.9 266.9 818.1 265.6 C816.3 264.3 813.2 260.7 813.2 260.7 Z"/>
<!-- ghost -->
<path fill="#fff" d="M577.2 344.0 C577.2 344.0 585.9 327.0 590.5 318.3 C595.1 309.6 600.4 298.4 604.9 291.7 C609.4 285.0 612.8 281.2 617.2 278.3 C621.6 275.4 627.1 274.2 631.5 274.2 C635.9 274.2 640.4 276.1 643.8 278.3 C647.2 280.5 649.3 283.0 652.0 287.6 C654.7 292.2 657.5 300.7 660.2 306.0 C662.9 311.3 665.3 315.5 668.4 319.3 C671.5 323.1 678.7 328.6 678.7 328.6 C678.7 328.6 671.5 330.8 668.4 332.7 C665.3 334.6 661.7 336.7 660.2 339.8 C658.7 342.9 658.5 346.8 659.2 351.1 C659.9 355.4 662.1 360.7 664.3 365.5 C666.5 370.3 669.8 375.7 672.5 379.8 C675.2 383.9 680.7 390.0 680.7 390.0 C680.7 390.0 676.6 393.2 676.6 393.2 C676.6 393.2 665.7 386.9 658.2 381.9 C650.7 376.9 639.4 368.9 631.5 363.4 C623.6 357.9 616.8 352.4 611.0 349.0 C605.2 345.6 601.5 343.7 596.7 342.9 C591.9 342.1 585.5 343.8 582.3 344.0 C579.0 344.2 577.2 344.0 577.2 344.0 Z"/>
<g fill="#1f1f1f">
<ellipse cx="618.6" cy="303.3" rx="6.5" ry="7"/>
<ellipse cx="640.7" cy="303.3" rx="6.7" ry="7"/>
<ellipse cx="630.5" cy="331" rx="9.6" ry="11.3"/>
</g>
<!-- stem -->
<path fill="#3aa046" d="M759.6 333.0 C759.6 333.0 761.5 326.4 762.4 323.9 C763.3 321.4 763.5 320.4 765.2 318.2 C766.9 316.0 769.7 313.0 772.8 310.7 C775.9 308.4 779.9 305.8 784.0 304.1 C788.1 302.4 792.8 301.2 797.2 300.3 C801.6 299.4 806.3 298.8 810.4 299.0 C814.5 299.2 818.3 299.8 821.7 301.3 C825.1 302.8 827.9 305.4 831.0 307.9 C834.1 310.4 840.5 316.3 840.5 316.3 C840.5 316.3 840.5 319.2 840.5 319.2 C840.5 319.2 827.0 321.1 821.7 322.0 C816.4 322.9 811.6 323.7 808.5 324.8 C805.4 325.9 804.7 326.6 802.8 328.6 C800.9 330.6 797.0 337.0 797.0 337.0 C797.0 337.0 759.6 333.0 759.6 333.0 Z"/>
<!-- pumpkin -->
<path fill="#f7891f" d="M770.9 331.0 C765.3 330.9 760.3 330.8 754.0 332.3 C747.7 333.8 740.0 336.8 733.3 339.8 C726.6 342.9 719.4 346.8 713.9 350.6 C708.4 354.4 704.3 359.0 700.2 362.8 C696.1 366.6 692.8 369.4 689.5 373.5 C686.2 377.6 683.2 382.6 680.4 387.1 C677.6 391.7 675.1 396.2 672.8 400.8 C670.5 405.4 668.7 409.4 666.7 414.5 C664.7 419.6 662.4 424.6 660.6 431.3 C658.8 438.1 657.0 447.7 656.0 455.0 C655.0 462.3 654.8 464.5 654.4 475.0 C654.0 485.5 653.1 503.0 653.5 518.0 C653.9 533.0 654.9 551.7 656.8 565.0 C658.7 578.3 661.5 589.3 665.0 598.0 C668.5 606.7 672.2 612.3 678.0 617.0 C683.8 621.7 691.8 624.3 700.0 626.0 C708.2 627.7 703.0 627.1 727.5 627.3 C752.0 627.5 824.6 628.2 847.0 627.3 C869.4 626.4 857.5 625.5 862.0 622.0 C866.5 618.5 870.4 613.4 874.0 606.0 C877.6 598.6 881.4 588.7 883.6 577.4 C885.9 566.1 886.7 551.2 887.5 538.0 C888.3 524.8 888.9 511.6 888.3 498.4 C887.6 485.2 885.4 470.9 883.6 459.0 C881.8 447.1 880.4 437.1 877.6 427.2 C874.8 417.3 870.2 407.7 866.6 399.8 C863.0 391.9 860.5 386.1 855.9 380.0 C851.3 373.9 844.2 367.9 839.3 363.3 C834.4 358.7 830.8 355.6 826.5 352.4 C822.2 349.2 818.0 346.8 813.7 344.2 C809.5 341.6 805.3 338.8 801.0 336.9 C796.7 335.0 792.8 333.9 787.8 332.9 C782.8 331.9 776.5 331.1 770.9 331.0 Z"/>
<!-- eyes -->
<g fill="#ffe512">
<ellipse cx="742.5" cy="386" rx="20.5" ry="26"/>
<ellipse cx="796" cy="386" rx="20.5" ry="26"/>
<ellipse cx="770.6" cy="437.3" rx="10.8" ry="12.8"/>
<path d="M725.7 443.9 C726.1 442.4 728.5 449.4 730.9 452.3 C733.3 455.2 736.1 458.7 740.0 461.3 C743.9 463.9 749.2 466.3 754.2 467.8 C759.2 469.3 765.1 470.0 769.7 470.4 C774.3 470.8 777.7 471.1 782.0 470.2 C786.3 469.3 791.1 467.3 795.5 465.2 C799.9 463.1 804.1 460.5 808.4 457.5 C812.7 454.5 817.8 449.9 821.3 447.1 C824.8 444.3 829.1 440.7 829.1 440.7 C829.1 440.7 831.4 441.3 831.5 446.0 C831.6 450.7 831.7 462.4 830.0 469.0 C828.3 475.6 824.9 481.4 821.3 485.9 C817.7 490.4 813.6 493.4 808.4 496.2 C803.2 499.0 796.3 501.8 790.3 502.7 C784.3 503.6 778.2 502.9 772.2 501.4 C766.2 499.9 760.0 497.5 754.2 493.6 C748.4 489.7 741.7 483.5 737.4 478.1 C733.1 472.7 730.2 467.0 728.3 461.3 C726.3 455.6 725.3 445.4 725.7 443.9 Z"/>
</g>
<g fill="#f7891f">
<circle cx="746.6" cy="401.8" r="12"/>
<circle cx="788.5" cy="401.8" r="12"/>
<rect x="780" y="460" width="15.3" height="20.2"/>
</g>
<!-- cat -->
<path fill="#1f1f1f" d="M619.1 495.9 C616.8 495.3 613.5 493.2 611.7 491.0 C609.9 488.8 609.0 486.0 608.5 482.6 C608.0 479.2 607.8 475.0 608.5 470.9 C609.2 466.8 610.7 461.7 612.8 458.1 C614.9 454.6 617.8 451.9 621.3 449.6 C624.8 447.3 629.0 445.2 634.0 444.3 C639.0 443.4 646.8 443.8 651.1 444.3 C655.4 444.8 656.4 445.3 659.6 447.4 C662.8 449.5 667.4 453.4 670.2 457.0 C673.0 460.6 674.8 464.4 676.6 468.7 C678.4 473.0 679.6 477.6 680.9 482.6 C682.2 487.6 683.1 495.2 684.2 498.6 C685.3 502.1 687.7 503.3 687.7 503.3 C687.7 503.3 701.4 502.2 708.9 502.1 C716.4 502.0 725.4 502.0 732.5 502.8 C739.6 503.6 745.4 504.8 751.3 506.8 C757.2 508.9 763.3 512.9 767.8 515.1 C772.3 517.3 778.4 519.8 778.4 519.8 C778.4 519.8 780.0 509.0 782.0 503.3 C784.0 497.6 790.2 485.6 790.2 485.6 C790.2 485.6 793.5 492.9 794.9 496.2 C796.3 499.5 796.6 504.0 798.4 505.6 C800.2 507.2 805.5 505.6 805.5 505.6 C805.5 505.6 818.5 483.2 818.5 483.2 C818.5 483.2 822.2 492.5 823.2 498.6 C824.2 504.7 825.0 514.3 824.4 519.8 C823.8 525.3 822.5 527.7 819.7 531.6 C817.0 535.5 811.8 540.4 807.9 543.3 C804.0 546.2 798.9 546.5 796.1 549.2 C793.4 552.0 792.4 554.9 791.4 559.8 C790.4 564.7 790.2 572.0 790.2 578.7 C790.2 585.4 790.8 593.6 791.4 599.9 C792.0 606.2 793.5 612.7 793.7 616.4 C793.9 620.1 794.6 621.3 792.6 622.3 C790.6 623.3 785.0 623.7 782.0 622.3 C779.0 620.9 776.9 618.9 774.9 614.0 C772.9 609.1 771.4 599.7 770.2 592.8 C769.0 585.9 767.8 572.8 767.8 572.8 C767.8 572.8 758.0 574.9 751.3 576.3 C744.6 577.7 735.3 580.4 727.8 581.0 C720.3 581.6 713.0 580.5 706.5 579.9 C700.0 579.3 688.9 577.5 688.9 577.5 C688.9 577.5 686.9 587.1 685.3 592.8 C683.7 598.5 681.1 606.8 679.5 611.7 C677.9 616.6 678.5 620.1 675.9 622.3 C673.3 624.4 667.2 625.6 664.1 624.6 C661.0 623.6 657.9 619.9 657.1 616.4 C656.3 612.9 658.0 608.5 659.4 603.4 C660.8 598.3 664.5 591.8 665.3 585.7 C666.1 579.6 665.5 572.8 664.1 566.9 C662.7 561.0 658.7 556.3 657.1 550.4 C655.5 544.5 654.9 537.9 654.7 531.6 C654.5 525.3 655.3 519.8 655.9 512.7 C656.5 505.6 658.5 495.6 658.2 489.1 C657.9 482.7 656.4 477.9 654.3 474.0 C652.2 470.1 648.6 467.5 645.7 465.5 C642.9 463.5 639.9 462.2 637.2 461.8 C634.6 461.4 631.5 462.1 629.8 463.4 C628.1 464.7 627.3 467.1 627.1 469.8 C626.9 472.5 628.3 476.4 628.7 479.4 C629.1 482.4 629.8 485.4 629.3 487.9 C628.8 490.4 627.2 493.0 625.5 494.3 C623.8 495.6 621.4 496.4 619.1 495.9 Z"/>
</svg>
</body></html>
